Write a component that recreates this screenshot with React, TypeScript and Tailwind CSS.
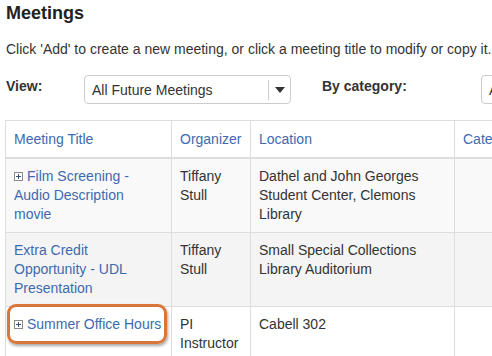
import React from 'react';

const font = { fontFamily: '"Liberation Sans", Arial, sans-serif' };

const PlusBox = () => (
	<svg width="9" height="9" viewBox="0 0 9 9" className="inline-block mr-[4px] align-[0px]">
		<rect x="0.5" y="0.5" width="8" height="8" fill="#fff" stroke="#8a8a8a" />
		<path d="M2 4.5h5M4.5 2v5" stroke="#3a4f7a" strokeWidth="1" />
	</svg>
);

const Select = ({ label, w }: { label: string; w: string }) => (
	<div className={`${w} h-[29px] border border-[#ccc] rounded-[4px] bg-white flex items-center shrink-0`}>
		<span className="flex-1 pl-[7px] text-[14px] text-[#333] pt-[1px] whitespace-nowrap overflow-hidden">{label}</span>
		<span className="w-px h-[20px] bg-[#ccc]" />
		<span className="w-[21px] flex justify-center">
			<svg width="10" height="6" viewBox="0 0 10 6">
				<path d="M0 0h10L5 6z" fill="#333" />
			</svg>
		</span>
	</div>
);

type Row = { title: string; plus: boolean; organizer: string; location: string; bg: string };

const rows: Row[] = [
	{ title: 'Film Screening - Audio Description movie', plus: true, organizer: 'Tiffany Stull', location: 'Dathel and John Georges Student Center, Clemons Library', bg: 'bg-[#f9f9f9]' },
	{ title: 'Extra Credit Opportunity - UDL Presentation', plus: false, organizer: 'Tiffany Stull', location: 'Small Special Collections Library Auditorium', bg: 'bg-[#f4f4f4]' },
	{ title: 'Summer Office Hours', plus: true, organizer: 'PI Instructor', location: 'Cabell 302', bg: 'bg-white' },
];

const cell = 'border-l border-[#ddd] px-[8px] pt-[8px] pb-[8px]';

export default function App() {
	return (
		<div className="w-[492px] h-[356px] overflow-hidden bg-white text-[#333]" style={font}>
			<div className="pl-[6px]">
				<h1 className="text-[18px] font-bold leading-[20px] pt-[3px] text-[#222]">Meetings</h1>
				<p className="text-[14px] leading-[20px] mt-[16px] whitespace-nowrap">
					Click 'Add' to create a new meeting, or click a meeting title to modify or copy it.
				</p>
				<div className="flex items-start mt-[16px] h-[29px] w-[600px]">
					<span className="text-[14px] font-bold w-[78px] shrink-0 pt-[1px]">View:</span>
					<Select label="All Future Meetings" w="w-[207px]" />
					<span className="text-[14px] font-bold ml-[31px] w-[159px] shrink-0 pt-[1px]">By category:</span>
					<Select label="All" w="w-[120px]" />
				</div>
			</div>
			<div className="relative ml-[5px] mt-[16px] w-[600px] border-t border-r border-[#ddd] text-[14px] leading-[19px]">
				<div className="grid grid-cols-[166px_79px_204px_1fr] border-b-2 border-[#ddd] bg-white">
					<div className={`${cell} pt-[9px] pb-[8px] text-[#3d6ab0]`}>Meeting Title</div>
					<div className={`${cell} pt-[9px] text-[#3d6ab0]`}>Organizer</div>
					<div className={`${cell} pt-[9px] text-[#3d6ab0]`}>Location</div>
					<div className={`${cell} pt-[9px] text-[#3d6ab0]`}>Category</div>
				</div>
				{rows.map((r) => (
					<div key={r.title} className={`grid grid-cols-[166px_79px_204px_1fr] border-b border-[#ddd] ${r.bg}`}>
						<div className={`${cell} text-[#3d6ab0]`}>
							{r.plus && <PlusBox />}
							{r.title}
						</div>
						<div className={cell}>{r.organizer}</div>
						<div className={cell}>{r.location}</div>
						<div className={cell}></div>
					</div>
				))}
				<div className="absolute left-[2px] top-[183px] w-[160px] h-[40px] rounded-[9px] border-[3px] border-[#d9773a] shadow-[1px_2px_3px_rgba(0,0,0,0.35)]" />
			</div>
		</div>
	);
}
